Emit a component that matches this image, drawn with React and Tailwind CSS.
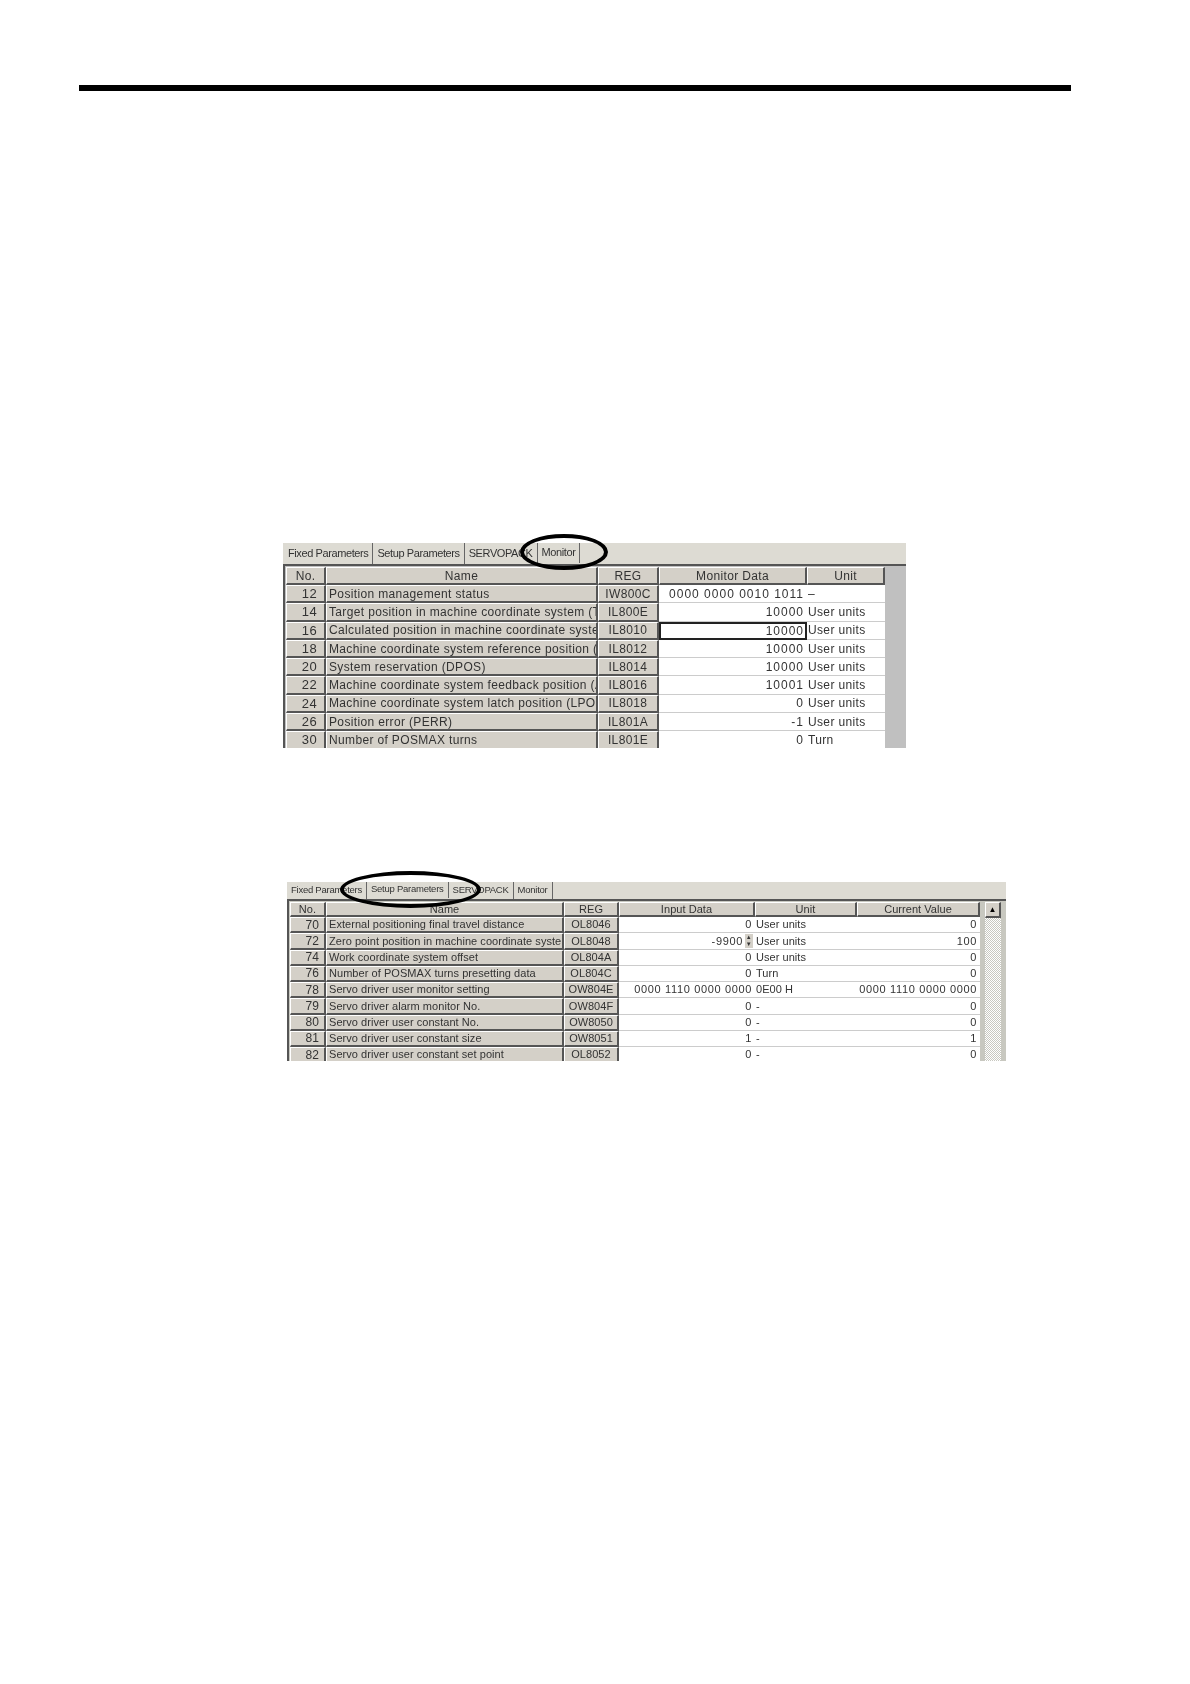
const font = '[font-family:"Liberation_Sans",Arial,sans-serif]'

const monitorRows = [
  ['12', 'Position management status', 'IW800C', '0000 0000 0010 1011', '–'],
  ['14', 'Target position in machine coordinate system (TPOS)', 'IL800E', '10000', 'User units'],
  ['16', 'Calculated position in machine coordinate system (CPOS)', 'IL8010', '10000', 'User units', true],
  ['18', 'Machine coordinate system reference position (MPOS)', 'IL8012', '10000', 'User units'],
  ['20', 'System reservation (DPOS)', 'IL8014', '10000', 'User units'],
  ['22', 'Machine coordinate system feedback position (APOS)', 'IL8016', '10001', 'User units'],
  ['24', 'Machine coordinate system latch position (LPOS)', 'IL8018', '0', 'User units'],
  ['26', 'Position error (PERR)', 'IL801A', '-1', 'User units'],
  ['30', 'Number of POSMAX turns', 'IL801E', '0', 'Turn'],
]

const setupRows = [
  ['70', 'External positioning final travel distance', 'OL8046', '0', 'User units', '0'],
  ['72', 'Zero point position in machine coordinate system offset', 'OL8048', '-9900', 'User units', '100', true],
  ['74', 'Work coordinate system offset', 'OL804A', '0', 'User units', '0'],
  ['76', 'Number of POSMAX turns presetting data', 'OL804C', '0', 'Turn', '0'],
  ['78', 'Servo driver user monitor setting', 'OW804E', '0000 1110 0000 0000', '0E00 H', '0000 1110 0000 0000'],
  ['79', 'Servo driver alarm monitor No.', 'OW804F', '0', '-', '0'],
  ['80', 'Servo driver user constant No.', 'OW8050', '0', '-', '0'],
  ['81', 'Servo driver user constant size', 'OW8051', '1', '-', '1'],
  ['82', 'Servo driver user constant set point', 'OL8052', '0', '-', '0'],
]

const bevel = 'bg-[#d4d0c8] border-t border-l border-t-white border-l-white border-b-2 border-r-2 border-b-[#555] border-r-[#555] overflow-hidden whitespace-nowrap'

function Tabs({ items, active, className }) {
  return (
    <div className={`flex items-center bg-[#dddbd3] text-[#333] ${className}`}>
      {items.map((item) => (
        <span
          key={item}
          className={`h-full flex items-center px-[4px] border-r border-r-[#666] ${item === active ? '-translate-y-[1px]' : ''}`}
        >
          {item}
        </span>
      ))}
    </div>
  )
}

function MonitorTable() {
  return (
    <div className="relative w-[623px] ml-[283px]">
      <div className="h-[205px] overflow-hidden text-[12px] tracking-[0.35px] text-[#333] blur-[0.3px]">
        <Tabs
          items={['Fixed Parameters', 'Setup Parameters', 'SERVOPACK', 'Monitor']}
          active="Monitor"
          className="h-[21px] pl-[1px] text-[11px] tracking-[-0.4px]"
        />
        <div className="border-t-2 border-t-[#555] border-l-2 border-l-[#555] pt-[1px] pl-[1px] bg-[#c0c0c0] h-[184px]">
          <div className="grid grid-cols-[40px_272px_61px_148px_78px] grid-rows-[18px] auto-rows-[18.3px]">
            {['No.', 'Name', 'REG', 'Monitor Data', 'Unit'].map((h) => (
              <div key={h} className={`${bevel} flex items-center justify-center`}>{h}</div>
            ))}
            {monitorRows.map(([no, name, reg, data, unit, selected]) => (
              <div key={no} className="contents">
                <div className={`${bevel} flex items-center justify-end pr-[7px] text-[13px]`}>{no}</div>
                <div className={`${bevel} flex items-center pl-[2px]`}>{name}</div>
                <div className={`${bevel} flex items-center justify-center`}>{reg}</div>
                <div className={`bg-white flex items-center justify-end tracking-[1px] whitespace-nowrap ${selected ? 'pr-[1px] border-2 border-[#222]' : 'pr-[3px] border-b border-b-[#ccc]'}`}>{data}</div>
                <div className="bg-white flex items-center pl-[1px] border-b border-b-[#ccc] overflow-hidden whitespace-nowrap">{unit}</div>
              </div>
            ))}
          </div>
        </div>
      </div>
      {/* hand drawn circle over the Monitor tab */}
      <div className="absolute left-[237px] top-[-9px] w-[88px] h-[36px] rounded-[50%] border-4 border-black" />
    </div>
  )
}

function SetupTable() {
  return (
    <div className="relative w-[719px] ml-[287px]">
      <div className="h-[179px] overflow-hidden text-[11px] tracking-[0.05px] text-[#333] blur-[0.3px]">
        <Tabs
          items={['Fixed Parameters', 'Setup Parameters', 'SERVOPACK', 'Monitor']}
          active="Setup Parameters"
          className="h-[17px] text-[9.5px] tracking-[-0.25px]"
        />
        <div className="flex border-t-2 border-t-[#555] border-l-2 border-l-[#555] pt-[1px] pl-[1px] bg-[#c8c8c0] h-[162px]">
          <div className="grid grid-cols-[36px_238px_55px_136px_102px_123px] grid-rows-[15px] auto-rows-[16.25px] content-start">
            {['No.', 'Name', 'REG', 'Input Data', 'Unit', 'Current Value'].map((h) => (
              <div key={h} className={`${bevel} flex items-center justify-center`}>{h}</div>
            ))}
            {setupRows.map(([no, name, reg, data, unit, value, editing]) => (
              <div key={no} className="contents">
                <div className={`${bevel} flex items-center justify-end pr-[5px] text-[12px]`}>{no}</div>
                <div className={`${bevel} flex items-center pl-[2px]`}>{name}</div>
                <div className={`${bevel} flex items-center justify-center`}>{reg}</div>
                <div className="bg-white flex items-center justify-end pr-[3px] tracking-[0.65px] whitespace-nowrap border-b border-b-[#ccc]">
                  {data}
                  {editing && (
                    <span className="ml-[2px] mr-[-1px] w-[8px] h-[14px] bg-[#d4d0c8] flex flex-col items-center justify-center text-[6px] leading-[7px]">
                      <span>▲</span>
                      <span>▼</span>
                    </span>
                  )}
                </div>
                <div className="bg-white flex items-center pl-[1px] border-b border-b-[#ccc]">{unit}</div>
                <div className="bg-white flex items-center justify-end pr-[3px] tracking-[0.65px] whitespace-nowrap border-b border-b-[#ccc]">{value}</div>
              </div>
            ))}
          </div>
          <div className="ml-[5px] w-[16px] h-full bg-[repeating-conic-gradient(#c8c8c0_0_25%,#ffffff_0_50%)] bg-[length:2px_2px]">
            <div className={`${bevel} h-[16px] flex items-center justify-center text-[8px] text-black`}>▲</div>
          </div>
        </div>
      </div>
      <div className="absolute left-[53px] top-[-11px] w-[141px] h-[37px] rounded-[50%] border-4 border-black" />
    </div>
  )
}

export default function App() {
  return (
    <div className={`w-[1190px] h-[1684px] bg-white overflow-hidden ${font}`}>
      <div className="ml-[79px] mt-[85px] w-[992px] h-[6px] bg-black" />
      <div className="mt-[452px]">
        <MonitorTable />
      </div>
      <div className="mt-[134px]">
        <SetupTable />
      </div>
    </div>
  )
}
